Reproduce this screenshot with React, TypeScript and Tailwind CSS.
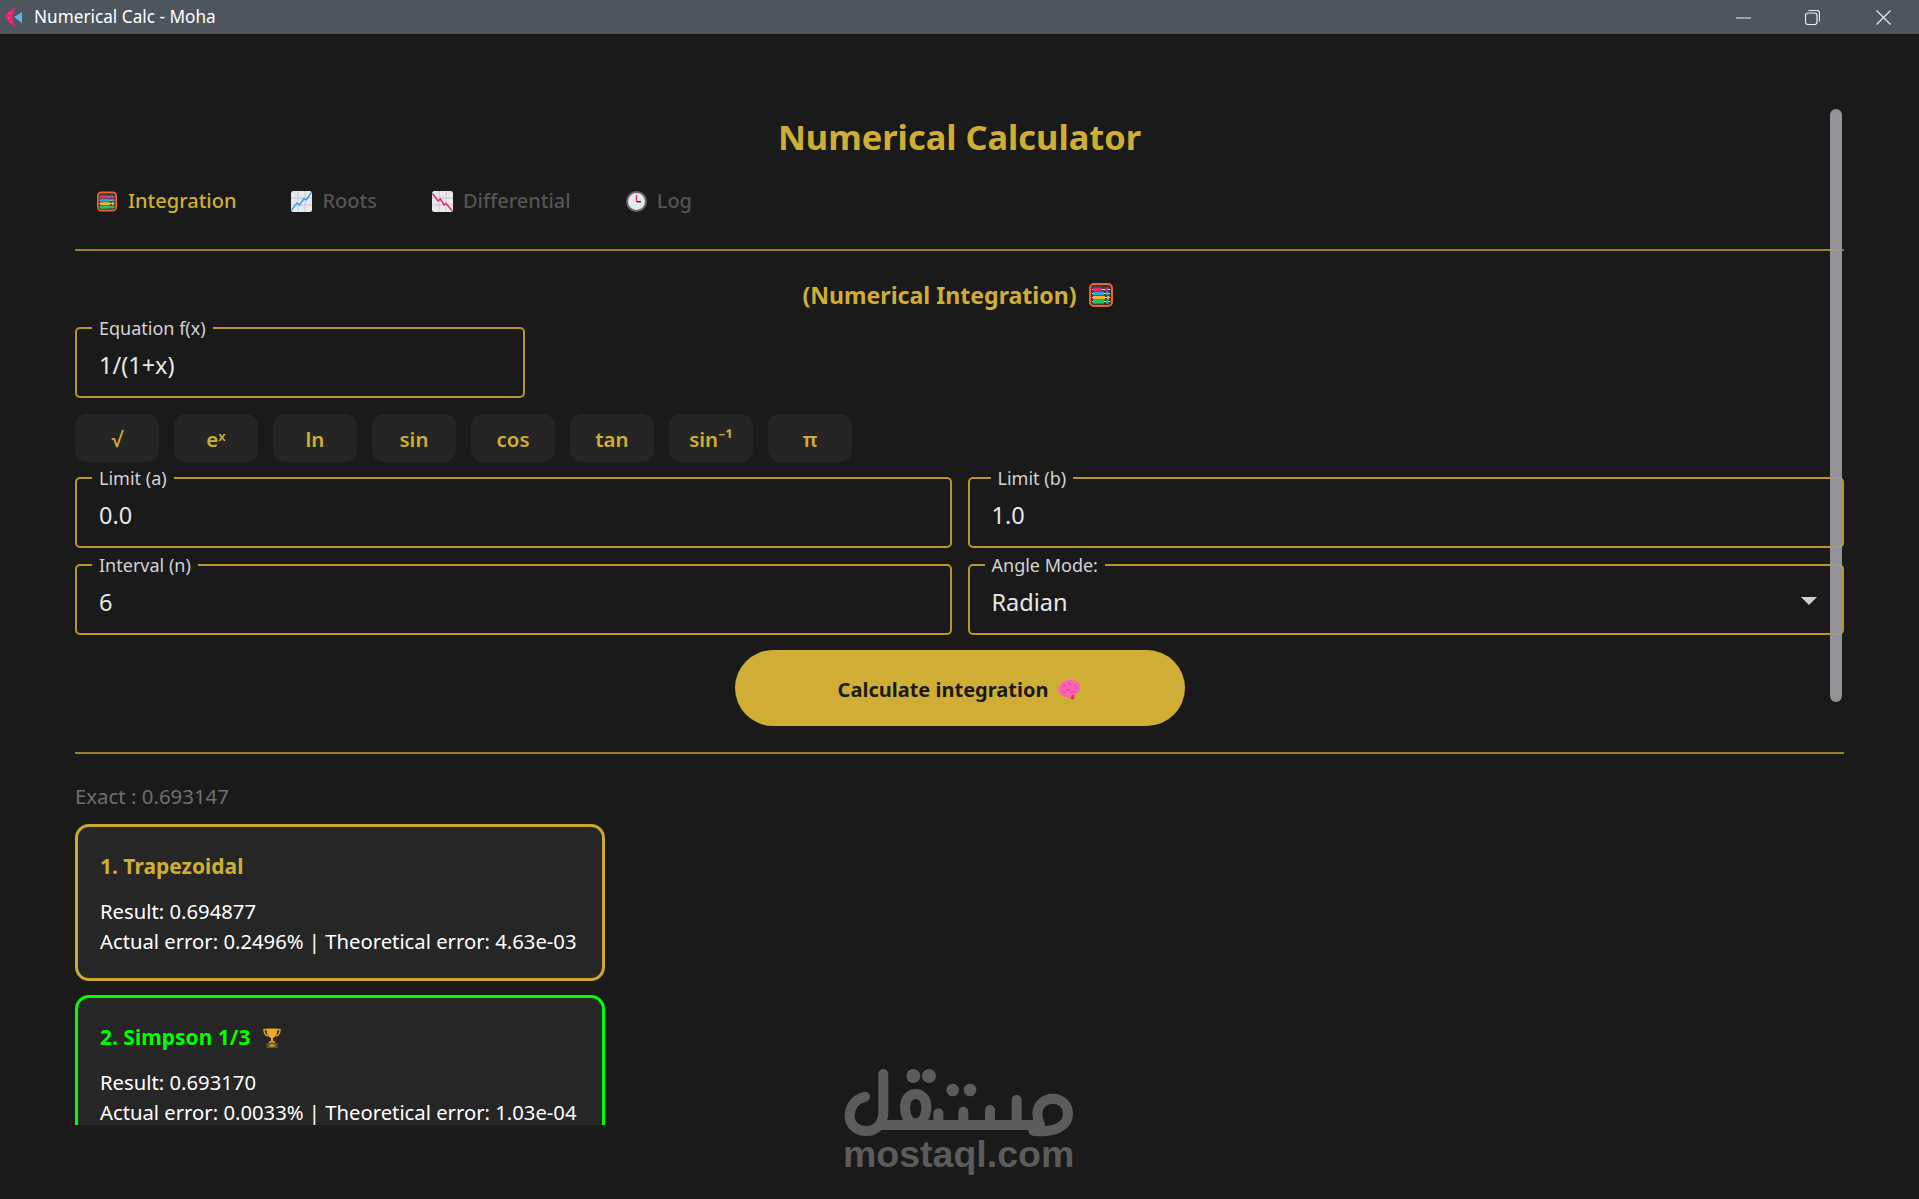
import React from "react";

const FONT = "font-['Noto_Sans','Open_Sans',sans-serif]";

function Abacus({ className }: { className: string }) {
  return (
    <svg viewBox="0 0 24 24" className={className}>
      <rect x="1" y="1" width="22" height="22" rx="4" fill="#3a3a3a" stroke="#f0632a" strokeWidth="2" />
      <path d="M3 6.5h18M3 10.5h18M3 14.5h18M3 18.5h18" stroke="#ddd" strokeWidth="1" />
      <rect x="4" y="4.5" width="9" height="3.6" fill="#e8256e" />
      <rect x="16" y="4.5" width="3" height="3.6" fill="#e8256e" />
      <rect x="4" y="8.7" width="11" height="3.6" fill="#2fa3e0" />
      <rect x="17" y="8.7" width="2.5" height="3.6" fill="#2fa3e0" />
      <rect x="4" y="12.9" width="12" height="3.6" fill="#f5b52a" />
      <rect x="18" y="12.9" width="2" height="3.6" fill="#f5b52a" />
      <rect x="4" y="17" width="11" height="3.6" fill="#1fc46a" />
      <rect x="17" y="17" width="2.5" height="3.6" fill="#1fc46a" />
    </svg>
  );
}

function ChartIcon({ down, className }: { down?: boolean; className: string }) {
  return (
    <svg viewBox="0 0 21 21" className={className}>
      <rect x="0" y="0" width="21" height="21" rx="2.5" fill="#e9eaee" />
      <path d="M0 7h21M0 14h21M7 0v21M14 0v21" stroke="#bfc1c7" strokeWidth="0.8" />
      {down ? (
        <path d="M0.5 2.5 6 10l2.5-2 3.5 6 2-1.5 6 7" fill="none" stroke="#e8256e" strokeWidth="1.5" />
      ) : (
        <path d="M0.5 19 6 12l2.5 2 4.5-6.5 2 1.5 5.5-7.5" fill="none" stroke="#2fa3e0" strokeWidth="1.5" />
      )}
    </svg>
  );
}

function ClockIcon({ className }: { className: string }) {
  return (
    <svg viewBox="0 0 21 21" className={className}>
      <circle cx="10.5" cy="10.5" r="9.5" fill="#e8e8ec" stroke="#666668" strokeWidth="2" />
      <path d="M10.5 10.5V4" stroke="#e8256e" strokeWidth="1.3" />
      <path d="M10.5 10.7h4.5" stroke="#333" strokeWidth="1.5" />
    </svg>
  );
}

function BrainIcon({ className }: { className: string }) {
  return (
    <svg viewBox="0 0 24 22" className={className}>
      <path
        d="M1 10C1.5 6 4 5 5.5 3.5 8 1 12 .5 15 1c4 .5 7 2 8 6 .8 3-.5 6-3 7.5-1.5 1-3 1.5-4.5 1.5l.5 2.5-1.5 1.5-2-1.500c-3 0-6-.5-8-2.500C2.500 14 1 13 1 10Z"
        fill="#fb63b5"
      />
      <path d="M16 16h1.500l-.3 3.500-2 1.500-1.200-1 .8-4Z" fill="#e8256e" />
      <path
        d="M5 8c1.500-2 3-2 4-1M11 4c2 0 3 1 3 2.500M17 6c2 .5 3 2 2.500 4M9 10.500c1.500 1 3 1 4 0M14 13c2 .5 3.500-.5 4-1.500M5 12c1 1 2 1.500 3.500 1"
        fill="none"
        stroke="#e33d98"
        strokeWidth="1"
      />
    </svg>
  );
}

function TrophyIcon({ className }: { className: string }) {
  return (
    <svg viewBox="0 0 18 20" className={className}>
      <path d="M4 1.500H1c0 4 1.500 6 4 6.500M14 1.500h3c0 4-1.500 6-4 6.500" fill="none" stroke="#e8a020" strokeWidth="1.500" />
      <path d="M3.500 .5h11c0 5-1.500 8.500-4.500 9.500v3h-2v-3C5 9 3.500 5.500 3.500 .5Z" fill="#eda726" />
      <rect x="6" y="13" width="6" height="2" fill="#c98a1c" />
      <rect x="3.500" y="15" width="11" height="5" fill="#6f4f2a" />
      <rect x="6.500" y="16.500" width="5" height="2" fill="#d9a030" />
    </svg>
  );
}

function AppIcon() {
  return (
    <svg viewBox="0 0 28 34" className="h-[34px] w-[28px] shrink-0">
      <path d="M5 16Q9 10 17 7 12.500 12 12.500 17 12.500 23 17 28 9 24 5 16Z" fill="#e8256e" />
      <path d="M14 17 22 12v11Z" fill="#5cb4e6" />
      <circle cx="10" cy="13" r=".6" fill="#f5b52a" />
      <circle cx="9" cy="18" r=".6" fill="#f5b52a" />
      <circle cx="11" cy="22" r=".6" fill="#f5b52a" />
    </svg>
  );
}

function Field({
  label,
  value,
  labelClass = "left-[15px]",
  select,
}: {
  label: string;
  value: string;
  labelClass?: string;
  select?: boolean;
}) {
  return (
    <div className="relative flex h-[71px] items-center rounded-[5px] border-2 border-[#b8962b] pl-[22px]">
      <span className={`absolute top-[-11px] bg-[#1a1a1a] px-[7px] text-[18px] leading-[20px] text-[#d4d4d4] ${labelClass}`}>
        {label}
      </span>
      <span className="mt-[5px] text-[23.5px] leading-[30px] text-[#e8e8e8]">{value}</span>
      {select && (
        <svg viewBox="0 0 16 8" className="absolute right-[25px] top-[31px] h-[8px] w-[16px]">
          <path d="M0 0h16l-8 8Z" fill="#d0d0d5" />
        </svg>
      )}
    </div>
  );
}

function ResultCard({
  title,
  trophy,
  result,
  error,
  border,
  titleColor,
}: {
  title: string;
  trophy?: boolean;
  result: string;
  error: string;
  border: string;
  titleColor: string;
}) {
  return (
    <div className={`h-[157px] w-[530px] shrink-0 rounded-[14px] border-[3px] bg-[#262626] pl-[22px] ${border}`}>
      <div className={`mt-[25px] flex h-[30px] items-center gap-[12px] text-[21px] font-bold ${titleColor}`}>
        {title}
        {trophy && <TrophyIcon className="h-[20px] w-[18px]" />}
      </div>
      <div className="mt-[14px] text-[20.25px] leading-[30px] text-white">{result}</div>
      <div className="text-[20.25px] leading-[30px] text-white">{error}</div>
    </div>
  );
}

export default function App() {
  const keys = ["√", "eˣ", "ln", "sin", "cos", "tan", "sin⁻¹", "π"];
  return (
    <div className={`relative flex h-[1199px] w-[1919px] flex-col overflow-hidden bg-[#1a1a1a] ${FONT}`}>
      <header className="flex h-[34px] shrink-0 items-center bg-[#4d565c] text-white">
        <AppIcon />
        <span className="ml-[6px] text-[17.2px]">Numerical Calc - Moha</span>
        <div className="ml-auto flex h-full items-center">
          <svg viewBox="0 0 15 15" className="h-[15px] w-[15px]">
            <path d="M0 8h15" stroke="#eee" strokeWidth="1" />
          </svg>
          <svg viewBox="0 0 15 15" className="ml-[54px] h-[15px] w-[15px]">
            <rect x="0.500" y="3" width="11.500" height="11.500" rx="2.500" fill="none" stroke="#eee" strokeWidth="1.200" />
            <path d="M3.500.5h8.500a2.500 2.500 0 0 1 2.500 2.500v8.500" fill="none" stroke="#eee" strokeWidth="1.200" />
          </svg>
          <svg viewBox="0 0 15 15" className="ml-[56px] mr-[28px] h-[15px] w-[15px]">
            <path d="M.5.5l14 14M14.500.5l-14 14" stroke="#eee" strokeWidth="1.100" />
          </svg>
        </div>
      </header>

      <main className="flex h-[1091px] flex-col overflow-hidden px-[75px]">
        <h1 className="mt-[78px] h-[50px] text-center text-[34.4px] font-bold leading-[50px] text-[#d0ae36]">
          Numerical Calculator
        </h1>
        <nav className="ml-[22px] mt-[19px] flex h-[40px] shrink-0 items-center gap-[55px] text-[20px] font-medium text-[#555555]">
          <div className="flex items-center gap-[11px] text-[#d0ae36]">
            <Abacus className="h-[21px] w-[20px]" />
            Integration
          </div>
          <div className="flex items-center gap-[10px]">
            <ChartIcon className="h-[21px] w-[21px]" />
            Roots
          </div>
          <div className="flex items-center gap-[10px]">
            <ChartIcon down className="h-[21px] w-[21px]" />
            Differential
          </div>
          <div className="flex items-center gap-[10px]">
            <ClockIcon className="h-[21px] w-[21px]" />
            Log
          </div>
        </nav>
        <div className="mt-[28px] h-[2px] shrink-0 bg-[#9c8028]" />

        <h2 className="mt-[29px] flex h-[30px] shrink-0 items-center justify-center gap-[12px] pr-[4px] text-[23.1px] font-bold text-[#d0ae36]">
          (Numerical Integration)
          <Abacus className="h-[24px] w-[24px]" />
        </h2>

        <div className="mt-[17px] w-[450px] shrink-0">
          <Field label="Equation f(x)" value="1/(1+x)" />
        </div>

        <div className="mt-[16px] flex shrink-0 gap-[15px]">
          {keys.map((k) => (
            <button
              key={k}
              className="h-[48px] w-[84px] rounded-[12px] bg-[#252525] pt-[2px] text-[20.5px] font-semibold text-[#d0ae36]"
            >
              {k}
            </button>
          ))}
        </div>

        <div className="mt-[15px] grid shrink-0 grid-cols-2 gap-x-[16px] gap-y-[16px]">
          <Field label="Limit (a)" value="0.0" />
          <Field label="Limit (b)" value="1.0" labelClass="left-[21px]" />
          <Field label="Interval (n)" value="6" />
          <Field label="Angle Mode:" value="Radian" select />
        </div>

        <button className="mx-auto mt-[15px] flex h-[76px] w-[450px] shrink-0 items-center justify-center gap-[9px] rounded-full bg-[#d0ae36] pt-[3px] text-[20px] font-bold text-[#1a1a1a]">
          Calculate integration
          <BrainIcon className="h-[22px] w-[24px]" />
        </button>

        <div className="mt-[26px] h-[2px] shrink-0 bg-[#9c8028]" />

        <div className="mt-[27px] h-[30px] shrink-0 text-[20.4px] leading-[30px] text-[#707070]">Exact : 0.693147</div>

        <div className="mt-[13px] flex flex-col gap-[14px]">
          <ResultCard
            title="1. Trapezoidal"
            result="Result: 0.694877"
            error="Actual error: 0.2496% | Theoretical error: 4.63e-03"
            border="border-[#cfa633]"
            titleColor="text-[#d0ae36]"
          />
          <ResultCard
            title="2. Simpson 1/3"
            trophy
            result="Result: 0.693170"
            error="Actual error: 0.0033% | Theoretical error: 1.03e-04"
            border="border-[#00ff00]"
            titleColor="text-[#00ff00]"
          />
        </div>
      </main>

      <div className="absolute left-[1830px] top-[109px] h-[593px] w-[12px] rounded-full bg-[#9a9a9e]/95" />

      <div className="absolute left-[800px] top-[1040px] h-[159px] w-[300px]">
        <svg viewBox="0 0 900 477" className="absolute left-0 top-0 h-full w-full">
          <g fill="none" stroke="#5c5c5c" strokeWidth="30" strokeLinecap="round" strokeLinejoin="round">
            <path d="M195 170C160 180 149 205 149 228c0 28 22 45 50 45 30 0 51-22 51-58V102" />
            <path d="M240 255H700" />
            <path d="M345 250c-22 0-30-28-30-50 0-22 14-38 32-38s32 16 32 38c0 22-8 50-34 50Z" />
            <path d="M415 250v-30M490 250v-35M570 250v-40M650 255v-75" />
            <path d="M700 272c70 8 104-18 104-50 0-28-20-46-46-46s-46 20-46 46c0 14 4 24 8 32" />
          </g>
          <g fill="#5c5c5c">
            <circle cx="340" cy="108" r="21" />
            <circle cx="387" cy="108" r="21" />
            <circle cx="458" cy="150" r="19" />
            <circle cx="510" cy="150" r="19" />
          </g>
        </svg>
        <div className="absolute left-[43px] top-[96px] font-['Liberation_Sans',sans-serif] text-[37.5px] font-bold leading-[36px] text-[#5c5c5c]">
          mostaql.com
        </div>
      </div>
    </div>
  );
}
